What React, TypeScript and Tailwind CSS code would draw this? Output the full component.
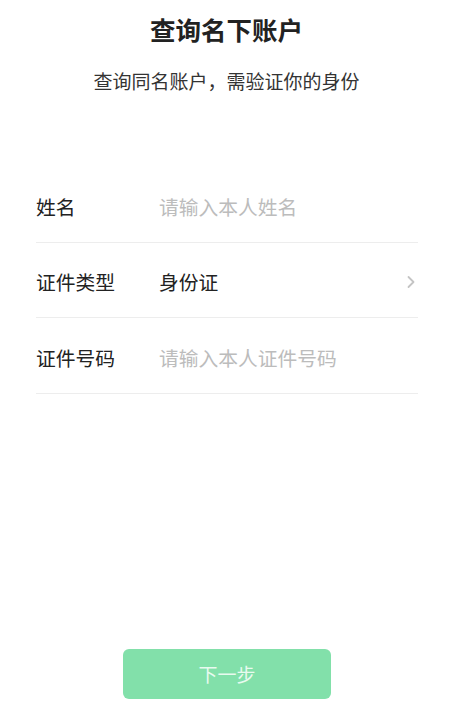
import { useState } from 'react';

interface Field {
  label: string;
  placeholder?: string;
  value?: string;
  select?: boolean;
}

const fields: Field[] = [
  { label: '姓名', placeholder: '请输入本人姓名' },
  { label: '证件类型', value: '身份证', select: true },
  { label: '证件号码', placeholder: '请输入本人证件号码' },
];

function Chevron() {
  return (
    <svg width="10" height="14" viewBox="0 0 10 14" fill="none">
      <path d="M2.5 2 L7.5 7 L2.5 12" stroke="#c4c4c4" strokeWidth="1.8" strokeLinecap="round" strokeLinejoin="round" />
    </svg>
  );
}

export default function App() {
  const [values, setValues] = useState<Record<string, string>>({});

  return (
    <div
      className="flex min-h-screen flex-col bg-white text-[#222]"
      style={{ fontFamily: '"Noto Sans CJK SC", "Noto Sans", sans-serif' }}
    >
      <div className="pt-[14px] text-center">
        <h1 className="pl-[3px] text-[25.5px] font-bold leading-[30px]">查询名下账户</h1>
        <p className="mt-[23px] pl-[3px] text-[19px] leading-[28px] text-[#333]">查询同名账户，需验证你的身份</p>
      </div>

      <div className="mt-[72px] ml-[36px] mr-[32px]">
        {fields.map((f) => (
          <div key={f.label} className="flex h-[75.5px] items-center border-b border-[#ededed] pt-[5px]">
            <span className="w-[123px] shrink-0 text-[19.75px]">{f.label}</span>
            {f.select ? (
              <div className="flex flex-1 items-center justify-between pr-[2px]">
                <span className="text-[19.75px]">{f.value}</span>
                <Chevron />
              </div>
            ) : (
              <input
                className="min-w-0 flex-1 bg-transparent text-[19.75px] outline-none placeholder:text-[#bcbcbc]"
                placeholder={f.placeholder}
                value={values[f.label] ?? ''}
                onChange={(e) => setValues({ ...values, [f.label]: e.target.value })}
              />
            )}
          </div>
        ))}
      </div>

      <div className="flex-1" />

      <div className="mb-[18px] flex justify-center pl-[4px]">
        <button
          disabled
          className="h-[50px] w-[208px] rounded-[6px] bg-[#82e0aa] text-[19px] text-[#e8faef]"
        >
          下一步
        </button>
      </div>
    </div>
  );
}
